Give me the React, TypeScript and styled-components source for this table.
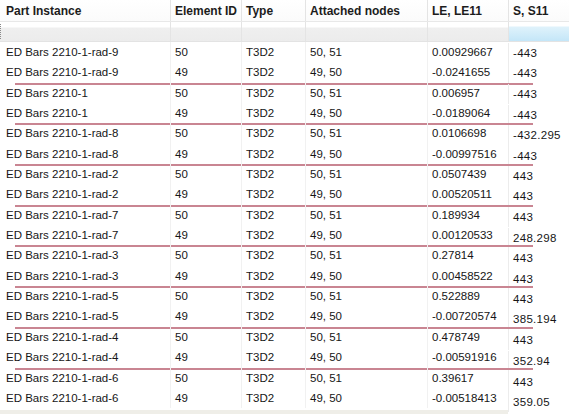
import React from 'react';
import styled, { createGlobalStyle } from 'styled-components';

const GlobalStyle = createGlobalStyle`
  html, body {
    margin: 0;
    padding: 0;
    background: #ffffff;
  }
  body {
    font-family: "Liberation Sans", Arial, sans-serif;
    color: #111;
  }
`;

const COLS = '170px 71px 64px 122px 81px 1fr';

const Table = styled.div`
  width: 569px;
  height: 414px;
  overflow: hidden;
  display: flex;
  flex-direction: column;
  background: #fff;
`;

const HeaderRow = styled.div`
  display: grid;
  grid-template-columns: ${COLS};
  height: 22px;
  background: linear-gradient(#ffffff, #fbfbfb);
  border-bottom: 1px solid #e8e8e8;
  box-sizing: border-box;
`;

const HeaderCell = styled.div<{ $pad?: number }>`
  font-size: 12px;
  font-weight: bold;
  color: #1c1c1c;
  padding: 4px 0 0 ${(p) => p.$pad ?? 4}px;
  border-left: 1px solid #e4e4e4;
  white-space: nowrap;
  &:first-child {
    border-left: none;
  }
`;

const FilterRow = styled.div`
  display: grid;
  grid-template-columns: ${COLS};
  height: 20px;
  border-bottom: 1px solid #e3e3e3;
  box-sizing: border-box;
  position: relative;
  &::before {
    content: '';
    position: absolute;
    left: 0;
    top: 2px;
    bottom: 2px;
    border-left: 1px dotted #8a8a8a;
  }
`;

const FilterCell = styled.div<{ $active?: boolean }>`
  border-left: 1px solid #e4e4e4;
  background: ${(p) =>
    p.$active
      ? 'linear-gradient(#ffffff 0, #ffffff 4px, #dff2fb 5px, #c4e6f8 100%)'
      : 'linear-gradient(#ffffff 0, #ffffff 5px, #efefef 6px, #ececec 100%)'};
  &:first-child {
    border-left: none;
  }
`;

const Body = styled.div`
  display: flex;
  flex-direction: column;
`;

const Pair = styled.div<{ $line: boolean }>`
  position: relative;
  &::after {
    content: '';
    display: ${(p) => (p.$line ? 'block' : 'none')};
    position: absolute;
    left: 15px;
    width: 518px;
    bottom: -2px;
    height: 2px;
    background: #c98592;
  }
`;

const Row = styled.div`
  display: grid;
  grid-template-columns: ${COLS};
  height: 20.35px;
`;

const Cell = styled.div<{ $pad?: number; $shift?: number }>`
  font-size: 11.5px;
  color: #161616;
  line-height: 20px;
  padding-left: ${(p) => p.$pad ?? 5}px;
  border-left: 1px solid #f1f1f1;
  white-space: nowrap;
  position: relative;
  top: ${(p) => p.$shift ?? 0}px;
  &:first-child {
    border-left: none;
  }
`;

const StressCell = styled(Cell)`
  letter-spacing: 0.3px;
  border-left-color: #ececec;
`;

const Footer = styled.div`
  margin-top: auto;
  width: 508px;
  height: 4px;
  background: #efeee8;
`;

type Elem = { id: number; nodes: string; le: string; s: string };

const groups: { name: string; rows: Elem[] }[] = [
  { name: 'ED Bars 2210-1-rad-9', rows: [
    { id: 50, nodes: '50, 51', le: '0.00929667', s: '-443' },
    { id: 49, nodes: '49, 50', le: '-0.0241655', s: '-443' },
  ] },
  { name: 'ED Bars 2210-1', rows: [
    { id: 50, nodes: '50, 51', le: '0.006957', s: '-443' },
    { id: 49, nodes: '49, 50', le: '-0.0189064', s: '-443' },
  ] },
  { name: 'ED Bars 2210-1-rad-8', rows: [
    { id: 50, nodes: '50, 51', le: '0.0106698', s: '-432.295' },
    { id: 49, nodes: '49, 50', le: '-0.00997516', s: '-443' },
  ] },
  { name: 'ED Bars 2210-1-rad-2', rows: [
    { id: 50, nodes: '50, 51', le: '0.0507439', s: '443' },
    { id: 49, nodes: '49, 50', le: '0.00520511', s: '443' },
  ] },
  { name: 'ED Bars 2210-1-rad-7', rows: [
    { id: 50, nodes: '50, 51', le: '0.189934', s: '443' },
    { id: 49, nodes: '49, 50', le: '0.00120533', s: '248.298' },
  ] },
  { name: 'ED Bars 2210-1-rad-3', rows: [
    { id: 50, nodes: '50, 51', le: '0.27814', s: '443' },
    { id: 49, nodes: '49, 50', le: '0.00458522', s: '443' },
  ] },
  { name: 'ED Bars 2210-1-rad-5', rows: [
    { id: 50, nodes: '50, 51', le: '0.522889', s: '443' },
    { id: 49, nodes: '49, 50', le: '-0.00720574', s: '385.194' },
  ] },
  { name: 'ED Bars 2210-1-rad-4', rows: [
    { id: 50, nodes: '50, 51', le: '0.478749', s: '443' },
    { id: 49, nodes: '49, 50', le: '-0.00591916', s: '352.94' },
  ] },
  { name: 'ED Bars 2210-1-rad-6', rows: [
    { id: 50, nodes: '50, 51', le: '0.39617', s: '443' },
    { id: 49, nodes: '49, 50', le: '-0.00518413', s: '359.05' },
  ] },
];

const App = () => (
  <>
    <GlobalStyle />
    <Table>
      <HeaderRow>
        <HeaderCell $pad={6}>Part Instance</HeaderCell>
        <HeaderCell>Element ID</HeaderCell>
        <HeaderCell>Type</HeaderCell>
        <HeaderCell>Attached nodes</HeaderCell>
        <HeaderCell>LE, LE11</HeaderCell>
        <HeaderCell>S, S11</HeaderCell>
      </HeaderRow>
      <FilterRow>
        <FilterCell />
        <FilterCell />
        <FilterCell />
        <FilterCell />
        <FilterCell />
        <FilterCell $active />
      </FilterRow>
      <Body>
        {groups.map((g, gi) => (
          <Pair key={gi} $line={gi < groups.length - 1}>
            {g.rows.map((r, ri) => {
              const idx = gi * 2 + ri;
              return (
                <Row key={ri}>
                  <Cell $pad={6}>{g.name}</Cell>
                  <Cell $pad={4}>{r.id}</Cell>
                  <Cell $pad={4}>T3D2</Cell>
                  <Cell $pad={4}>{r.nodes}</Cell>
                  <Cell $pad={4}>{r.le}</Cell>
                  <StressCell $pad={4} $shift={1 + Math.round(idx / 6)}>{r.s}</StressCell>
                </Row>
              );
            })}
          </Pair>
        ))}
      </Body>
      <Footer />
    </Table>
  </>
);

export default App;
